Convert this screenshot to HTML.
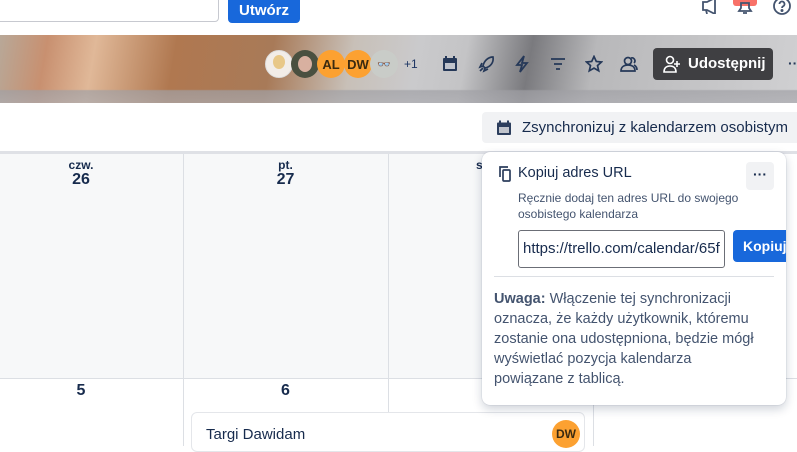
<!DOCTYPE html>
<html><head><meta charset="utf-8"><style>
*{box-sizing:border-box;margin:0;padding:0}
body{width:797px;height:446px;overflow:hidden;position:relative;background:#fff;font-family:"Liberation Sans",sans-serif;color:#172b4d}
.abs{position:absolute}
.av{position:absolute;top:50px;width:28px;height:28px;border-radius:50%;font-size:13px;font-weight:bold;color:#3a2a10;display:flex;align-items:center;justify-content:center}
.ic{position:absolute;top:55px;width:18px;height:18px}
</style></head><body>
<div class="abs" style="left:-10px;top:-10px;width:229px;height:32px;border:1px solid #c7c9d0;border-radius:4px;background:#fff"></div>
<div class="abs" style="left:228px;top:-4px;width:72px;height:27px;background:#1868db;border-radius:4px;color:#fff;font-weight:bold;font-size:15px;text-align:center;line-height:30px">Utwórz</div>
<svg class="abs" style="left:701px;top:0" width="18" height="14" viewBox="0 0 18 14" fill="none" stroke="#44546f" stroke-width="1.8"><path d="M2 2h4l8-4v16l-8-4H2z M5 10l1 4"/></svg>
<div class="abs" style="left:733px;top:0;width:24px;height:6px;background:#f87168;border-radius:0 0 3px 3px"></div>
<svg class="abs" style="left:736px;top:0" width="18" height="16" viewBox="0 0 18 16" fill="none" stroke="#44546f" stroke-width="1.8"><path d="M3 11h12l-2-3V3H5v5z M7 13h4"/></svg>
<svg class="abs" style="left:772px;top:-4px" width="20" height="20" viewBox="0 0 20 20" fill="none" stroke="#44546f" stroke-width="1.8"><circle cx="10" cy="10" r="8"/><path d="M7.5 8a2.5 2.5 0 1 1 3.5 2.3c-.7.4-1 .8-1 1.7"/><circle cx="10" cy="14.5" r=".6" fill="#44546f"/></svg>

<div class="abs" style="left:0;top:35px;width:797px;height:68px;background:linear-gradient(100deg,#b8a898 0%,#c89070 6%,#e0b898 12%,#b07850 22%,#a87a58 34%,#c8c0b8 44%,#cacacc 52%,#c4c4c6 58%,#7a7a7e 66%,#b8b8ba 74%,#d0d0d2 100%)"></div>
<div class="abs" style="left:0;top:35px;width:797px;height:68px;background:linear-gradient(180deg,rgba(255,255,255,0) 0%,rgba(255,255,255,0) 80%,rgba(160,160,165,.7) 82%,rgba(170,170,175,.7) 100%)"></div>
<div class="av" style="left:265px;background:#f2ede8;border:1px solid #ddd"><div style="width:12px;height:14px;background:#e8c888;border-radius:50%;margin-top:-4px"></div></div>
<div class="av" style="left:291px;background:#4a5040"><div style="width:14px;height:16px;background:#d8b0a0;border-radius:50%"></div></div>
<div class="av" style="left:317px;background:#fca131">AL</div>
<div class="av" style="left:344px;background:#fca131">DW</div>
<div class="av" style="left:370px;background:#c9ccc8;font-size:11px;color:#222">👓</div>
<div class="abs" style="left:404px;top:57px;font-size:12px;color:#1d3563">+1</div>
<svg class="ic" style="left:441px" viewBox="0 0 18 18"><rect x="2" y="3" width="14" height="13" rx="1" fill="#253858"/><path d="M5 1v4M13 1v4" stroke="#253858" stroke-width="2"/><rect x="4" y="8" width="10" height="6" fill="#bfc3cc"/></svg>
<svg class="ic" style="left:477px" viewBox="0 0 18 18" fill="none" stroke="#253858" stroke-width="1.7"><path d="M16 2c-5 0-9 4-10 9l2 2c5-1 9-5 8-11zM6 11l-3 1 2-4M8 13l-1 3 4-2M3 16l3-3"/></svg>
<svg class="ic" style="left:513px" viewBox="0 0 18 18" fill="none" stroke="#253858" stroke-width="1.8"><path d="M11 1L4 10h5l-2 7 7-9H9z"/></svg>
<svg class="ic" style="left:549px" viewBox="0 0 18 18" stroke="#253858" stroke-width="1.8"><path d="M2 4h14M5 9h8M7 14h4"/></svg>
<svg class="ic" style="left:585px" viewBox="0 0 18 18" fill="none" stroke="#253858" stroke-width="1.7"><path d="M9 1.5l2.3 5 5.2.5-4 3.6 1.2 5.2L9 13.1l-4.7 2.7 1.2-5.2-4-3.6 5.2-.5z"/></svg>
<svg class="ic" style="left:620px" viewBox="0 0 18 18" fill="none" stroke="#253858" stroke-width="1.7"><circle cx="8" cy="6" r="3.5"/><path d="M1 16c0-4 3-6 7-6s7 2 7 6z M11 3a3 3 0 0 1 3 5 M14 10c2 1 3 3 3 5"/></svg>
<div class="abs" style="left:653px;top:48px;width:120px;height:32px;background:#3f3f42;border-radius:4px;color:#fff;font-weight:bold;font-size:15px;line-height:32px;padding-left:35px">Udostępnij</div>
<svg class="abs" style="left:663px;top:55px" width="18" height="18" viewBox="0 0 18 18" fill="none" stroke="#fff" stroke-width="1.6"><circle cx="7" cy="5" r="3.5"/><path d="M1 17c0-4 2.5-6 6-6s6 2 6 6zM14 6v6M11 9h6"/></svg>
<div class="abs" style="left:788px;top:55px;font-size:14px;color:#253858;font-weight:bold">··</div>

<div class="abs" style="left:482px;top:112px;width:320px;height:31px;background:#f1f2f4;border-radius:4px;font-size:15px;color:#172b4d;line-height:31px;padding-left:40px;white-space:nowrap">Zsynchronizuj z kalendarzem osobistym</div>
<svg class="abs" style="left:496px;top:120px" width="16" height="16" viewBox="0 0 16 16"><rect x="1" y="2.5" width="14" height="12.5" rx="1" fill="#2c3e5d"/><path d="M4 0.5v3M12 0.5v3" stroke="#2c3e5d" stroke-width="2"/><rect x="3" y="7" width="10" height="6" fill="#c0c4cc"/></svg>

<div class="abs" style="left:0;top:151px;width:797px;height:3px;background:#dfe1e6"></div>
<div class="abs" style="left:0;top:154px;width:593px;height:224px;background:#f7f8f9"></div>
<div class="abs" style="left:0;top:378px;width:797px;height:1px;background:#dcdfe4"></div>
<div class="abs" style="left:183px;top:154px;width:1px;height:292px;background:#dcdfe4"></div>
<div class="abs" style="left:388px;top:154px;width:1px;height:292px;background:#dcdfe4"></div>
<div class="abs" style="left:593px;top:154px;width:1px;height:292px;background:#dcdfe4"></div>
<div class="abs" style="left:0;top:158px;width:162px;text-align:center;font-size:12px;font-weight:bold">czw.</div>
<div class="abs" style="left:0;top:171px;width:162px;text-align:center;font-size:16px;font-weight:bold">26</div>
<div class="abs" style="left:183px;top:158px;width:205px;text-align:center;font-size:12px;font-weight:bold">pt.</div>
<div class="abs" style="left:183px;top:171px;width:205px;text-align:center;font-size:16px;font-weight:bold">27</div>
<div class="abs" style="left:476px;top:158px;font-size:12px;font-weight:bold">s</div>
<div class="abs" style="left:0;top:382px;width:162px;text-align:center;font-size:16px;font-weight:bold">5</div>
<div class="abs" style="left:183px;top:382px;width:205px;text-align:center;font-size:16px;font-weight:bold">6</div>
<div class="abs" style="left:191px;top:412px;width:394px;height:40px;background:#fff;border:1px solid #e4e6ea;border-radius:6px;font-size:15px;padding:13px 0 0 14px">Targi Dawidam</div>
<div class="abs" style="left:552px;top:420px;width:28px;height:28px;border-radius:50%;background:#fca131;font-size:12px;font-weight:bold;color:#3a2a10;text-align:center;line-height:28px">DW</div>

<div class="abs" style="left:482px;top:152px;width:304px;height:253px;background:#fff;border-radius:8px;box-shadow:0 4px 10px rgba(9,30,66,.2),0 0 1px rgba(9,30,66,.3)"></div>
<svg class="abs" style="left:497px;top:165px" width="16" height="18" viewBox="0 0 16 18" fill="none" stroke="#2c3e5d" stroke-width="1.7"><path d="M3 12V2h8"/><rect x="6" y="5" width="7" height="11" rx="1"/></svg>
<div class="abs" style="left:518px;top:165px;font-size:14.5px;color:#172b4d">Kopiuj adres URL</div>
<div class="abs" style="left:746px;top:162px;width:28px;height:28px;background:#f1f2f4;border-radius:4px;text-align:center;font-size:14px;font-weight:bold;line-height:24px">···</div>
<div class="abs" style="left:518px;top:190px;font-size:12px;line-height:16px;color:#44546f;width:250px">Ręcznie dodaj ten adres URL do swojego osobistego kalendarza</div>
<div class="abs" style="left:518px;top:230px;width:207px;height:38px;border:1px solid #6b6e76;border-radius:3px;font-size:15px;line-height:36px;padding-left:4px;overflow:hidden;white-space:nowrap;color:#172b4d">https://trello.com/calendar/65f</div>
<div class="abs" style="left:733px;top:230px;width:53px;height:32px;background:#1868db;border-radius:4px 0 0 4px;color:#fff;font-weight:bold;font-size:14px;line-height:32px;padding-left:10px;overflow:hidden;white-space:nowrap">Kopiuj</div>
<div class="abs" style="left:494px;top:276px;width:280px;height:1px;background:#dcdfe4"></div>
<div class="abs" style="left:494px;top:289px;width:290px;font-size:14.5px;line-height:20px;color:#44546f;white-space:nowrap"><b>Uwaga:</b> Włączenie tej synchronizacji<br>oznacza, że każdy użytkownik, któremu<br>zostanie ona udostępniona, będzie mógł<br>wyświetlać pozycja kalendarza<br>powiązane z tablicą.</div>
</body></html>
